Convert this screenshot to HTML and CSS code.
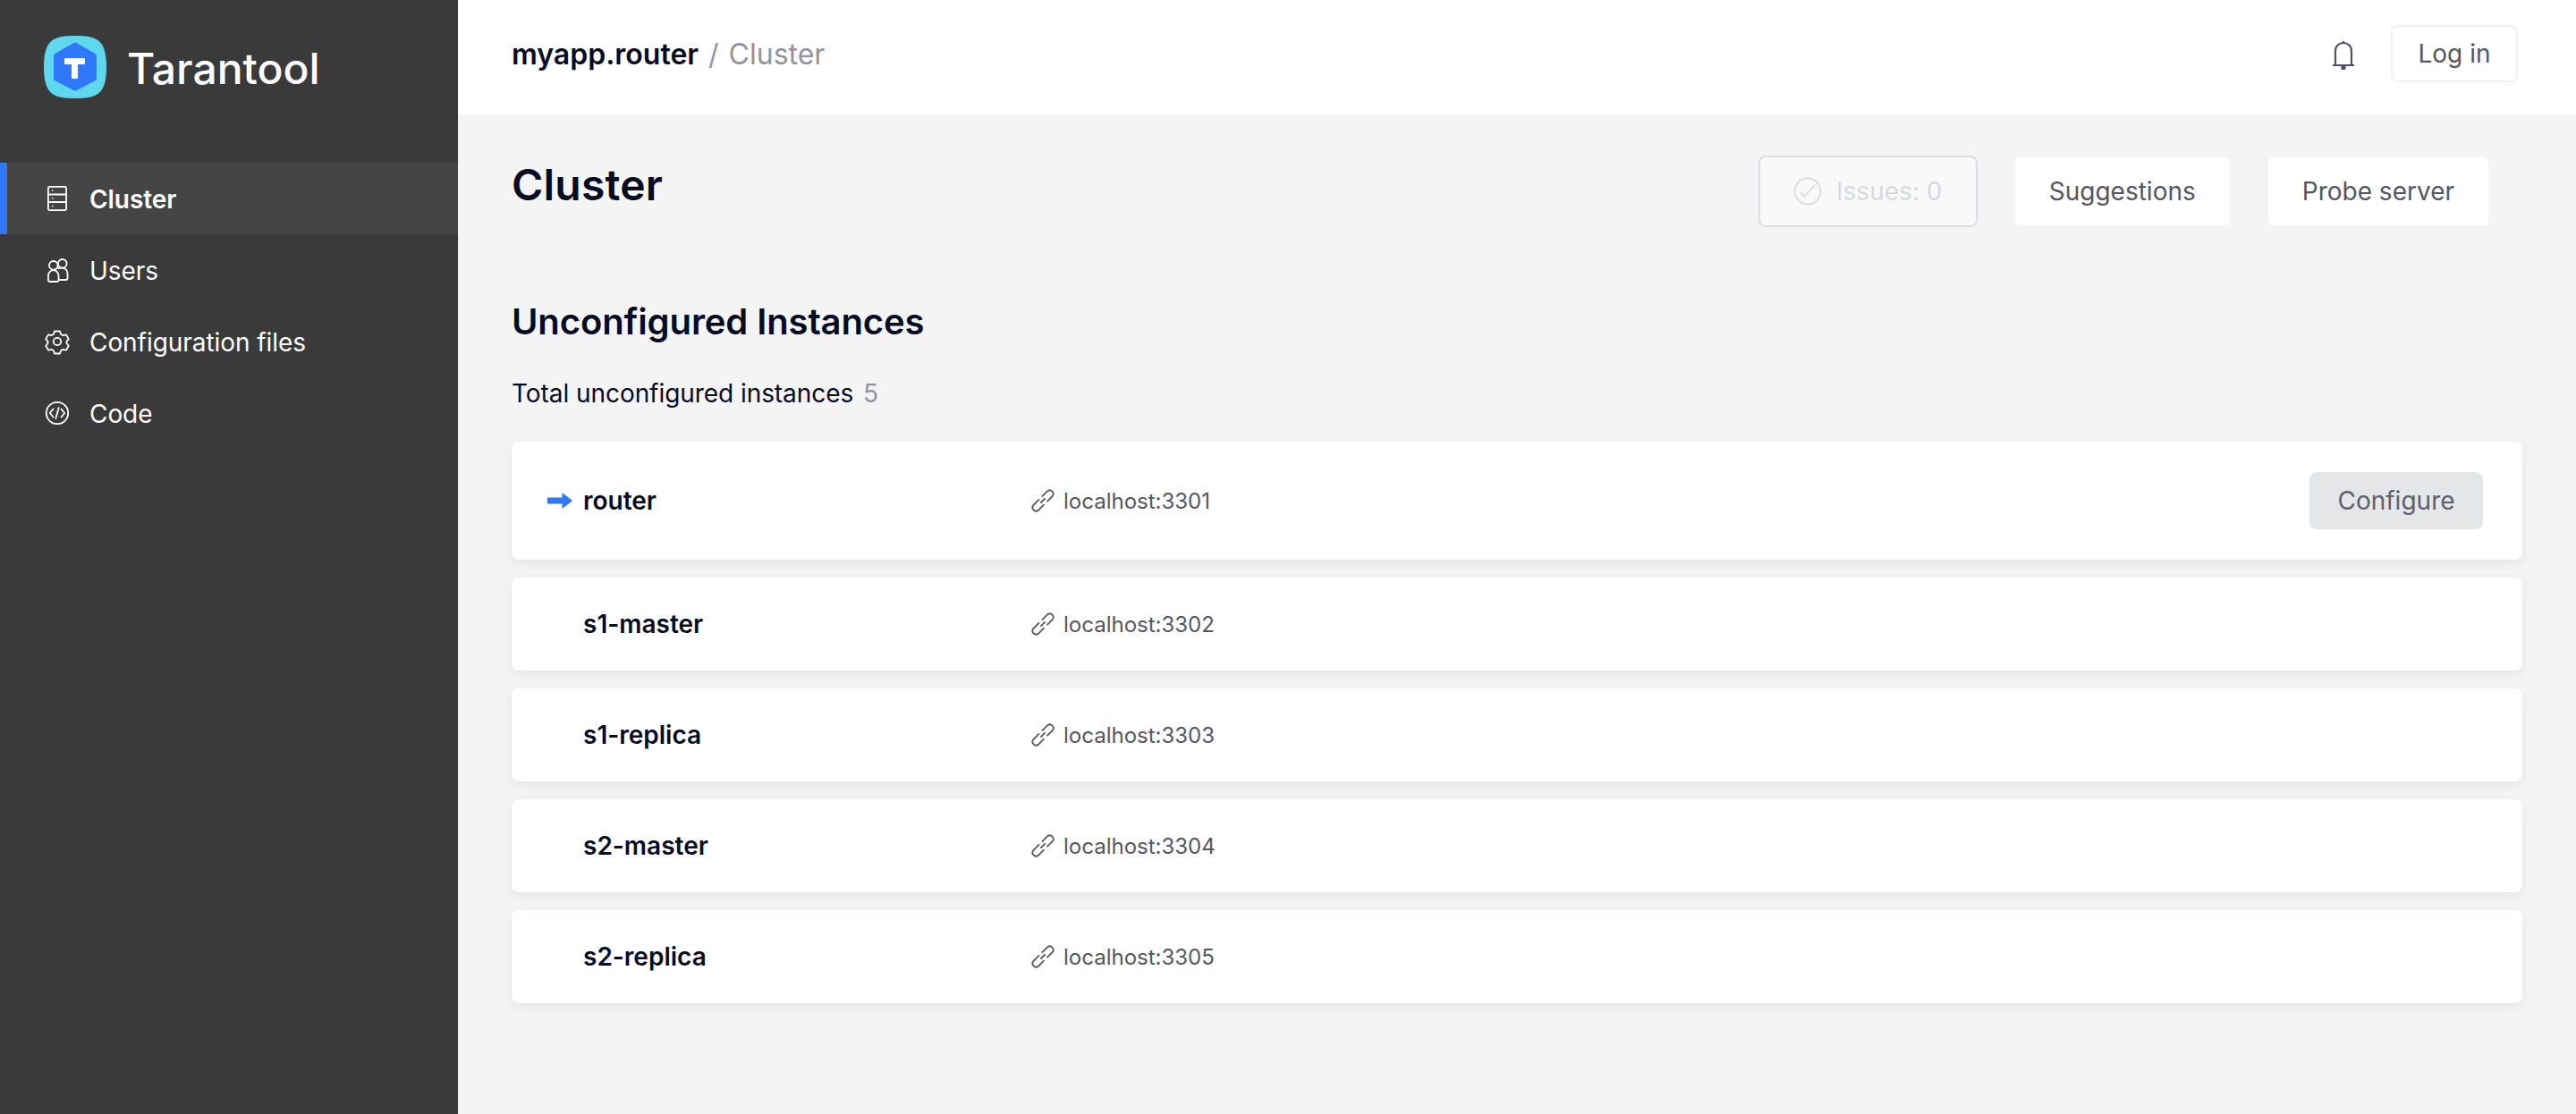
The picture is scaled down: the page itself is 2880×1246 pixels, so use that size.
FILE: index.html
```html
<!DOCTYPE html>
<html lang="en">
<head>
<meta charset="utf-8">
<title>Cluster</title>
<link rel="stylesheet" href="styles.css">
</head>
<body>
<aside class="sidebar">
  <div class="brand">
    <svg class="brand-mark" viewBox="0 0 70 70" width="70" height="70">
      <path fill="#5fd8ee" d="M35 0C58 0 70 3 70 35C70 67 58 70 35 70C12 70 0 67 0 35C0 3 12 0 35 0Z"/>
      <polygon fill="#2f78fb" stroke="#2f78fb" stroke-width="6" stroke-linejoin="round" points="35,10.500 56,22.500 56,47.500 35,58.500 14,47.500 14,22.500"/>
      <rect x="23" y="25" width="23" height="7" rx="1" fill="#fff"/>
      <rect x="31" y="25" width="7" height="23" rx="1.500" fill="#fff"/>
    </svg>
    <span class="brand-name">Tarantool</span>
  </div>
  <nav class="nav">
    <a class="nav-item is-active">
      <svg class="nav-icon" viewBox="0 0 28 32" width="28" height="32" fill="none" stroke="#fff" stroke-width="1.800">
        <rect x="3.900" y="2.900" width="20.200" height="26.200" rx="1.500"/>
        <path d="M3.900 11.500H24.100M3.900 20H24.100"/>
        <path d="M8 7H9.500M8 15.800H9.500M8 24.500H9.500" stroke-width="1.500"/>
      </svg>
      <span>Cluster</span>
    </a>
    <a class="nav-item">
      <svg class="nav-icon" viewBox="0 0 28 32" width="28" height="32" fill="none" stroke="#fff" stroke-width="1.800">
        <circle cx="9.800" cy="10.800" r="4.800"/>
        <circle cx="19.800" cy="8.800" r="4.800"/>
        <path d="M3.900 27.500V22.500C3.900 19 6.500 16.200 9.700 16.200C13 16.200 15.500 19 15.500 22.500V27.500C15.500 28.500 15 29 14 29H5.500C4.500 29 3.900 28.500 3.900 27.500Z"/>
        <path d="M14.500 14.500C16 13.800 18 13.600 19.800 13.600C23.200 13.600 25.500 16.500 25.500 20V25.500C25.500 26.600 25 27 24 27H15.500"/>
      </svg>
      <span>Users</span>
    </a>
    <a class="nav-item">
      <svg class="nav-icon" viewBox="0 0 28 32" width="28" height="32" fill="none" stroke="#fff" stroke-width="1.800" stroke-linejoin="round">
        <circle cx="14" cy="16" r="4.200"/>
        <path d="M11 4.500H17L18 7.800L20.600 9.200L24 8.400L26.800 13.200L24.500 15.900V18L26.800 20.800L24 25.600L20.600 24.800L18 26.200L17 29.500H11L10 26.200L7.400 24.800L4 25.600L1.200 20.800L3.500 18V15.900L1.200 13.200L4 8.400L7.400 9.200L10 7.800Z"/>
      </svg>
      <span>Configuration files</span>
    </a>
    <a class="nav-item">
      <svg class="nav-icon" viewBox="0 0 28 32" width="28" height="32" fill="none" stroke="#fff" stroke-width="1.800" stroke-linecap="round" stroke-linejoin="round">
        <circle cx="14" cy="16" r="12.200"/>
        <path d="M9.500 11.500L5.800 16L9.500 20.500M18.500 11.500L22.200 16L18.500 20.500M15.700 10L12.300 22"/>
      </svg>
      <span>Code</span>
    </a>
  </nav>
</aside>
<div class="main">
  <header class="topbar">
    <div class="crumbs">
      <span class="crumb-app">myapp.router</span>
      <span class="crumb-sep">/</span>
      <span class="crumb-page">Cluster</span>
    </div>
    <div class="top-actions">
      <svg class="bell" viewBox="0 0 26 34" width="26" height="34" fill="none" stroke="#4f5263" stroke-width="2.200">
        <path d="M1 28H25M4 28V12C4 6.500 8 3 13 3C18 3 22 6.500 22 12V28"/>
        <path d="M13 1V3"/>
        <rect x="10.500" y="28" width="5" height="5" rx="1.500" fill="#4f5263" stroke="none"/>
      </svg>
      <button class="btn-login">Log in</button>
    </div>
  </header>
  <main class="content">
    <div class="title-row">
      <h1 class="page-title">Cluster</h1>
      <div class="toolbar">
        <button class="btn-issues">
          <svg viewBox="0 0 32 32" width="32" height="32" fill="none" stroke="#dcdde2" stroke-width="2">
            <circle cx="16" cy="16" r="14.500"/>
            <path d="M8 16.700L12.300 21.700L24 9" stroke-width="1.800"/>
          </svg>
          <span>Issues: 0</span>
        </button>
        <button class="btn-tool">Suggestions</button>
        <button class="btn-tool">Probe server</button>
      </div>
    </div>
    <h2 class="section-title">Unconfigured Instances</h2>
    <p class="total">Total unconfigured instances <span class="total-count">5</span></p>
    <ul class="instances">
      <li class="instance is-current">
        <svg class="current-arrow" viewBox="0 0 28 18" width="28" height="18"><path fill="#2f78fb" d="M0 5.500H16.500V0L28 9L16.500 18V12.500H0Z"/></svg>
        <span class="instance-name">router</span>
        <span class="instance-uri">
          <svg class="link-icon" viewBox="0 0 26 26" width="26" height="26" fill="none" stroke="#55565f" stroke-width="1.800" stroke-linecap="round"><path d="M12.500 7.900L18.200 2.200A4 4 0 0 1 23.800 7.800L18 13.600M14 17.600L7.800 23.800A4 4 0 0 1 2.200 18.200L8.500 11.900M11 15L12.500 13.500M13.500 12.500L15 11"/></svg>
          localhost:3301
        </span>
        <button class="btn-configure">Configure</button>
      </li>
      <li class="instance">
        <span class="instance-name">s1-master</span>
        <span class="instance-uri">
          <svg class="link-icon" viewBox="0 0 26 26" width="26" height="26" fill="none" stroke="#55565f" stroke-width="1.800" stroke-linecap="round"><path d="M12.500 7.900L18.200 2.200A4 4 0 0 1 23.800 7.800L18 13.600M14 17.600L7.800 23.800A4 4 0 0 1 2.200 18.200L8.500 11.900M11 15L12.500 13.500M13.500 12.500L15 11"/></svg>
          localhost:3302
        </span>
      </li>
      <li class="instance">
        <span class="instance-name">s1-replica</span>
        <span class="instance-uri">
          <svg class="link-icon" viewBox="0 0 26 26" width="26" height="26" fill="none" stroke="#55565f" stroke-width="1.800" stroke-linecap="round"><path d="M12.500 7.900L18.200 2.200A4 4 0 0 1 23.800 7.800L18 13.600M14 17.600L7.800 23.800A4 4 0 0 1 2.200 18.200L8.500 11.900M11 15L12.500 13.500M13.500 12.500L15 11"/></svg>
          localhost:3303
        </span>
      </li>
      <li class="instance">
        <span class="instance-name">s2-master</span>
        <span class="instance-uri">
          <svg class="link-icon" viewBox="0 0 26 26" width="26" height="26" fill="none" stroke="#55565f" stroke-width="1.800" stroke-linecap="round"><path d="M12.500 7.900L18.200 2.200A4 4 0 0 1 23.800 7.800L18 13.600M14 17.600L7.800 23.800A4 4 0 0 1 2.200 18.200L8.500 11.900M11 15L12.500 13.500M13.500 12.500L15 11"/></svg>
          localhost:3304
        </span>
      </li>
      <li class="instance">
        <span class="instance-name">s2-replica</span>
        <span class="instance-uri">
          <svg class="link-icon" viewBox="0 0 26 26" width="26" height="26" fill="none" stroke="#55565f" stroke-width="1.800" stroke-linecap="round"><path d="M12.500 7.900L18.200 2.200A4 4 0 0 1 23.800 7.800L18 13.600M14 17.600L7.800 23.800A4 4 0 0 1 2.200 18.200L8.500 11.900M11 15L12.500 13.500M13.500 12.500L15 11"/></svg>
          localhost:3305
        </span>
      </li>
    </ul>
  </main>
</div>
</body>
</html>
```
FILE: styles.css
```css
* { box-sizing: border-box; }
html, body { height: 100%; }
body {
  margin: 0;
  display: flex;
  min-height: 1246px;
  overflow: hidden;
  background: #f4f4f4;
  color: #070c22;
  font-family: Inter, "Liberation Sans", sans-serif;
  font-size: 28px;
}
button { font-family: inherit; cursor: pointer; }

.sidebar { flex: 0 0 512px; width: 512px; background: #3a3a3a; color: #fff; }
.brand { height: 182px; padding: 40px 0 0 49px; display: flex; align-items: flex-start; gap: 23px; }
.brand-mark { flex: none; }
.brand-name { font-size: 48px; line-height: 74px; font-weight: 500; }
.nav { display: flex; flex-direction: column; }
.nav-item { height: 80px; padding-left: 50px; display: flex; align-items: center; gap: 22px; font-size: 28px; letter-spacing: -.06px; }
.nav-item span { margin-top: 1px; }
.nav-icon { flex: none; }
.nav-item.is-active { background: #454545; font-weight: 600; padding-left: 42px; border-left: 8px solid #2f78fb; }

.main { flex: 1; min-width: 0; display: flex; flex-direction: column; }
.topbar { height: 128px; flex: none; background: #fff; padding: 0 65px 0 60px; display: flex; align-items: center; justify-content: space-between; }
.crumbs { display: flex; align-items: center; gap: 11px; font-size: 32px; margin-top: -8px; }
.crumb-app { font-weight: 600; }
.crumb-sep, .crumb-page { color: #91939f; }
.top-actions { display: flex; align-items: center; gap: 40px; margin-top: -8px; }
.bell { margin-top: 4px; }
.btn-login { width: 142px; height: 64px; background: #fff; border: 2px solid #f2f2f4; border-radius: 8px; color: #55565f; font-size: 28px; padding: 0; }

.content { flex: 1; padding: 0 60px 0 60px; }
.title-row { display: flex; justify-content: space-between; align-items: flex-start; height: 208px; padding-right: 38px; }
.page-title { margin: 50px 0 0; font-size: 48px; line-height: 58px; font-weight: 600; letter-spacing: .2px; }
.toolbar { display: flex; align-items: center; gap: 43px; margin-top: 46px; }
.btn-issues { width: 245px; height: 80px; margin-right: -1px; display: flex; align-items: center; justify-content: center; gap: 16px; padding: 0; background: #f9f9f9; border: 2px solid #dcdce2; border-radius: 8px; color: #d8d9df; font-size: 28px; }
.btn-tool { height: 76px; padding: 0 38px; background: #fff; border: 0; border-radius: 6px; color: #55565f; font-size: 28px; }
.section-title { margin: 0; font-size: 40px; line-height: 48px; font-weight: 600; letter-spacing: -.1px; }
.total { margin: 36px 0 0; font-size: 28px; line-height: 40px; letter-spacing: -.06px; }
.total-count { color: #91939f; margin-left: 3px; }

.instances { list-style: none; margin: 34px 0 0; padding: 0; display: flex; flex-direction: column; gap: 20px; }
.instance { position: relative; height: 104px; display: flex; align-items: center; padding: 0 44px 0 80px; background: #fff; border-radius: 8px; box-shadow: 0 4px 12px rgba(20, 20, 40, .07); }
.instance.is-current { height: 132px; }
.current-arrow { position: absolute; left: 40px; top: 57px; }
.instance-name { width: 501px; flex: none; font-size: 28px; font-weight: 600; }
.instance-uri { display: flex; align-items: center; gap: 10px; font-size: 24px; color: #55565f; }
.btn-configure { margin-left: auto; width: 194px; height: 64px; padding: 0; background: #e5e6e8; border: 0; border-radius: 8px; color: #5c5f6c; font-size: 28px; }
```
